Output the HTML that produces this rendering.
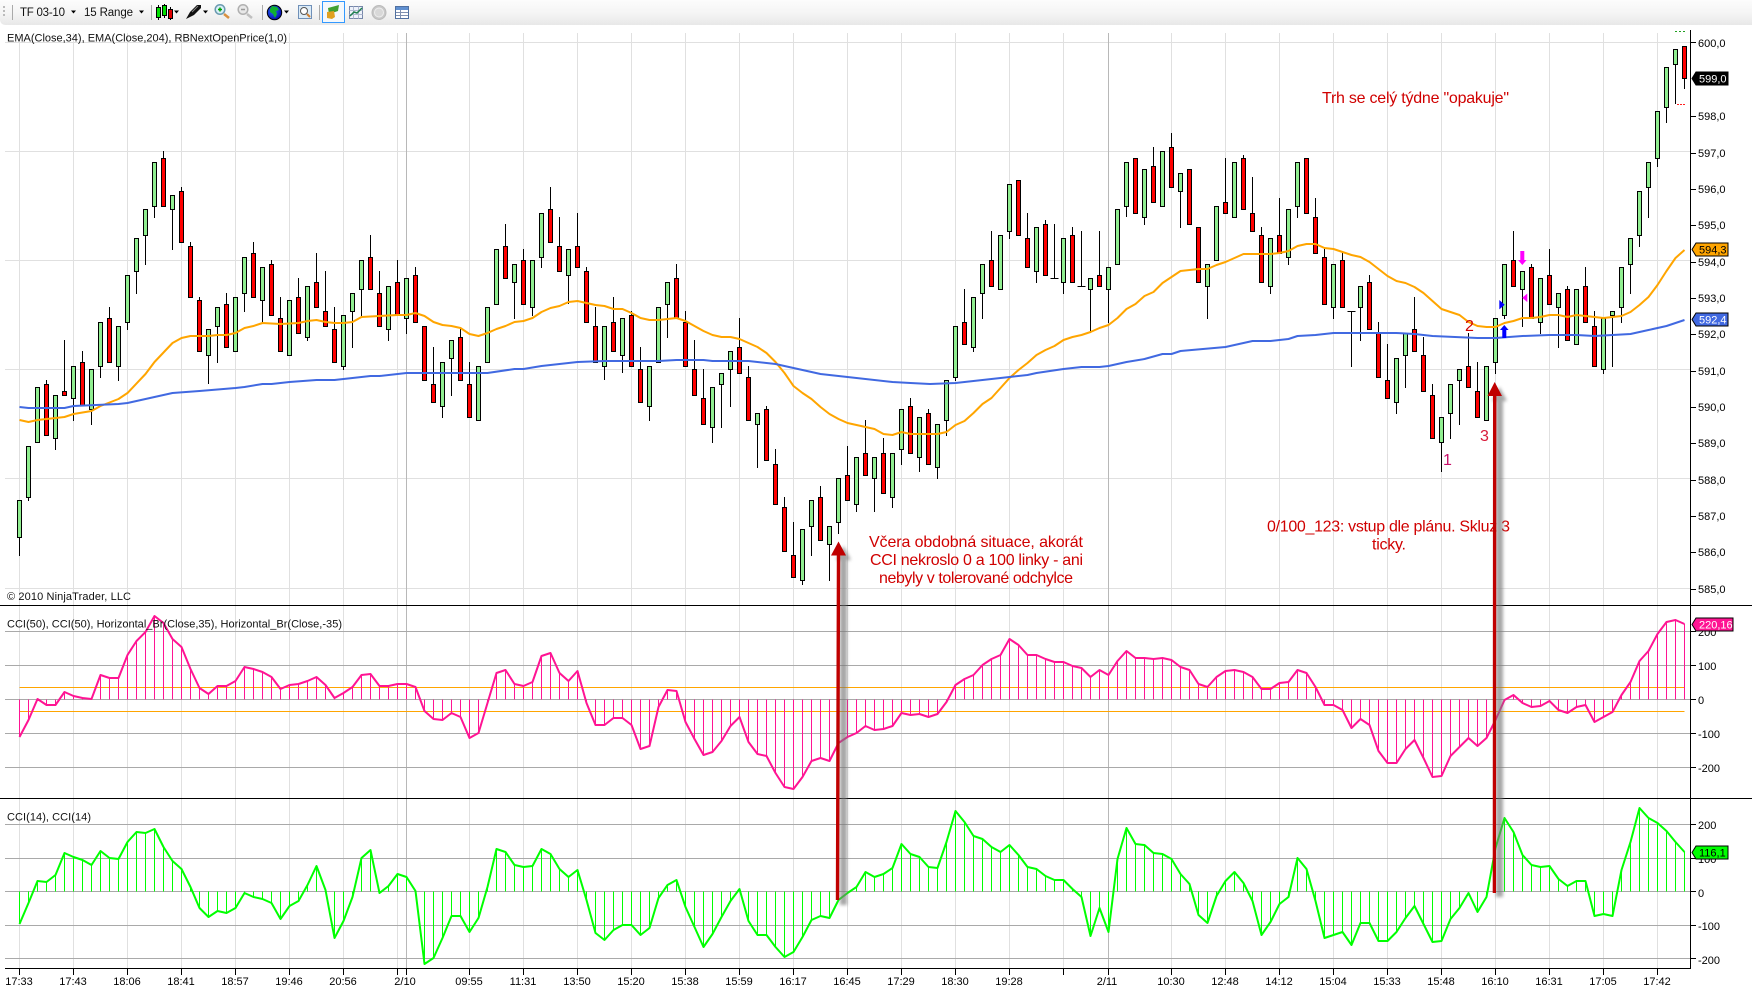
<!DOCTYPE html>
<html><head><meta charset="utf-8"><title>Chart</title>
<style>
html,body{margin:0;padding:0;background:#fff;width:1752px;height:993px;overflow:hidden}
svg{display:block;font-family:"Liberation Sans",Arial,sans-serif;font-size:11px}
.r{fill:#d00000;font-size:16px}
</style></head><body>
<svg width="1752" height="993" viewBox="0 0 1752 993" xmlns="http://www.w3.org/2000/svg">
<defs>
<linearGradient id="tb" x1="0" y1="0" x2="0" y2="1"><stop offset="0" stop-color="#fcfcfc"/><stop offset=".5" stop-color="#f5f5f5"/><stop offset="1" stop-color="#e8e8e8"/></linearGradient>
<filter id="bl" x="-100%" y="-5%" width="300%" height="110%"><feGaussianBlur stdDeviation="1.5"/></filter>
<radialGradient id="glb" cx=".4" cy=".4" r=".7"><stop offset="0" stop-color="#2a6cff"/><stop offset="1" stop-color="#0000a0"/></radialGradient>
</defs>
<rect width="1752" height="993" fill="#fff"/>
<!-- toolbar -->
<path d="M0 0H1752V25H6Q0 25 0 19z" fill="url(#tb)"/>
<path d="M3 6h2v2H3zM3 10h2v2H3zM3 14h2v2H3z" fill="#bbb"/>
<path d="M12.5 5V20M151.5 5V20M262.5 5V20M319.5 5V20" stroke="#aaa" fill="none"/>
<text x="20" y="16" font-size="11.5" textLength="45" fill="#111">TF 03-10</text>
<text x="84" y="16" font-size="11.5" textLength="49" fill="#111">15 Range</text>
<path d="M71 10.5h5l-2.500 3zM139 10.500h5l-2.500 3zM174 10.500h5l-2.500 3zM203 10.500h5l-2.500 3zM284 10.500h5l-2.500 3z" fill="#000"/>
<!-- candle icon -->
<path d="M158.500 5V20M164.500 4V18M170.500 7V20" stroke="#000"/>
<rect x="156.500" y="7.500" width="4" height="10" fill="#00e000" stroke="#000"/>
<rect x="162.500" y="5.500" width="4" height="10" fill="#00e000" stroke="#000"/>
<rect x="168.500" y="9.500" width="4" height="9" fill="#e00000" stroke="#000"/>
<!-- pen icon -->
<path d="M186 19L190 12 197 5 201 5 201 8 194 15z" fill="#111"/><path d="M192 12L198 6" stroke="#888"/>
<!-- zoom in/out -->
<circle cx="220" cy="9.500" r="4.800" fill="#d8f0f8" stroke="#6a9ab0" stroke-width="1.500"/><path d="M218 9.500h4M220 7.500v4" stroke="#00a000" stroke-width="1.500"/><path d="M224 14L229 18" stroke="#d89040" stroke-width="2.500"/>
<circle cx="243" cy="9.500" r="4.800" fill="#e8e8e8" stroke="#b0b0b0" stroke-width="1.500"/><path d="M241 9.500h4" stroke="#999" stroke-width="1.500"/><path d="M247 14L252 18" stroke="#c0c0c0" stroke-width="2.500"/>
<!-- globe -->
<circle cx="274.500" cy="12.500" r="7.200" fill="url(#glb)" stroke="#000"/><path d="M272 6l5 1 2 3-3 1 1 3-2 4-2-4-3-2 0-3z" fill="#10b030"/>
<!-- doc zoom -->
<rect x="298.500" y="5.500" width="13" height="13" fill="#dcecf8" stroke="#7090b8"/><circle cx="304" cy="11" r="3.500" fill="#fff" stroke="#555"/><path d="M307 14l3 3" stroke="#d08030" stroke-width="2"/>
<!-- selected -->
<rect x="322.500" y="1.500" width="22" height="21" fill="#f4f8fc" stroke="#3399ff"/>
<path d="M328 8l11-3-1 6-9 3z" fill="#40a030"/><path d="M327 12l7-1 1 6-3 2-5-1z" fill="#e0a020"/>
<!-- chart -->
<rect x="349.500" y="6.500" width="13" height="12" fill="#eef2fa" stroke="#7788aa"/><path d="M353.500 6.500V18.500M358.500 6.500V18.500M349.500 10.500H362.500M349.500 14.500H362.500" stroke="#b0b8d0"/><path d="M350 16l4-4 3 1 5-5" stroke="#208050" stroke-width="1.500" fill="none"/>
<!-- coin -->
<circle cx="379" cy="12.500" r="7" fill="#c8c8c8" stroke="#bbb"/><circle cx="379" cy="12.500" r="4.500" fill="#d8d8d8" stroke="#eee"/>
<!-- table -->
<rect x="395.500" y="6.500" width="13" height="12" fill="#fff" stroke="#5070a0"/><rect x="396" y="7" width="12" height="3" fill="#5f8fd0"/><path d="M396 12.500H408M396 15.500H408M400.500 10V18" stroke="#8090b0"/>

<!-- grid -->
<g stroke="#e0e0e0" fill="none">
<path d="M5 42.500H1690M5 151.500H1690M5 260.500H1690M5 369.500H1690M5 478.500H1690M5 588.500H1690"/>
<path d="M19.500 33V968M73.500 33V968M127.500 33V968M181.500 33V968M235.500 33V968M289.500 33V968M343.500 33V968M397.500 33V968M469.500 33V968M523.500 33V968M577.500 33V968M631.500 33V968M685.500 33V968M739.500 33V968M793.500 33V968M847.500 33V968M901.500 33V968M955.500 33V968M1009.500 33V968M1063.500 33V968M1171.500 33V968M1225.500 33V968M1279.500 33V968M1333.500 33V968M1387.500 33V968M1441.500 33V968M1495.500 33V968M1549.500 33V968M1603.500 33V968M1657.500 33V968"/>
</g>
<path d="M406.500 33V968M1108.500 33V968" stroke="#b8b8b8" fill="none"/>
<path d="M5 631.500H1690M5 665.500H1690M5 699.500H1690M5 733.500H1690M5 767.500H1690M5 824.500H1690M5 858.500H1690M5 891.500H1690M5 925.500H1690M5 958.500H1690" stroke="#a9a9a9" fill="none"/>
<path d="M19.500 687.500H1684.500M19.500 711.500H1684.500" stroke="#ffa500" fill="none"/>

<!-- wicks -->
<path fill="none" stroke="#000" d="M19.500 500V556M28.500 446V501M46.500 380V385M55.500 438V450M64.500 340V392M73.500 398V421M82.500 351V363M91.500 409V425M100.500 366V378M109.500 307V319M118.500 366V381M127.500 322V330M136.500 271V294M145.500 235V265M154.500 206V218M163.500 151V159M172.500 209V250M181.500 187V192M190.500 242V247M199.500 297V301M208.500 355V384M217.500 326V363M226.500 293V305M244.500 293V312M253.500 242V254M262.500 300V323M271.500 260V265M280.500 297V319M298.500 278V298M307.500 337V341M316.500 253V283M325.500 271V312M334.500 307V330M343.500 366V370M352.500 311V348M361.500 289V316M370.500 235V258M379.500 271V294M388.500 329V341M397.500 260V283M406.500 318V334M415.500 267V276M433.500 347V385M442.500 406V418M451.500 358V396M460.500 327V338M469.500 362V385M505.500 224V247M514.500 282V319M523.500 249V261M532.500 307V316M541.500 257V268M550.500 187V210M559.500 217V247M568.500 275V304M577.500 213V247M586.500 267V272M595.500 307V327M604.500 366V380M613.500 297V323M622.500 355V373M631.500 311V316M640.500 347V370M649.500 406V421M667.500 304V338M676.500 264V279M685.500 311V323M694.500 340V370M703.500 369V399M712.500 427V443M721.500 384V428M730.500 369V407M739.500 318V348M748.500 366V378M757.500 424V468M766.500 406V410M775.500 449V465M784.500 497V508M793.500 522V556M802.500 580V585M811.500 526V556M820.500 486V498M829.500 544V581M838.500 522V534M847.500 446V476M856.500 504V512M865.500 420V454M874.500 478V512M883.500 438V454M892.500 497V508M901.500 449V465M910.500 398V407M919.500 457V472M928.500 409V414M937.500 467V479M946.500 420V436M955.500 377V381M964.500 289V323M973.500 347V352M982.500 293V319M991.500 231V261M1009.500 231V239M1027.500 213V239M1036.500 271V283M1045.500 220V225M1054.500 224V278M1050.500 278.500H1058.500M1063.500 282V294M1072.500 227V236M1081.500 231V286M1077.500 286.500H1085.500M1090.500 289V333M1099.500 231V276M1108.500 289V323M1126.500 206V217M1144.500 217V225M1153.500 147V167M1171.500 133V148M1180.500 191V228M1207.500 286V319M1225.500 158V203M1243.500 155V159M1252.500 177V214M1261.500 227V236M1270.500 286V294M1279.500 198V236M1288.500 257V265M1297.500 206V218M1315.500 198V218M1324.500 249V258M1333.500 307V319M1342.500 253V261M1351.500 311V367M1347.500 311.500H1355.500M1360.500 307V341M1369.500 275V283M1378.500 322V334M1387.500 344V381M1396.500 402V414M1405.500 355V388M1414.500 297V330M1423.500 337V356M1432.500 384V396M1441.500 442V472M1450.500 413V439M1459.500 380V425M1468.500 333V367M1477.500 362V392M1495.500 362V374M1504.500 315V319M1513.500 231V261M1522.500 289V327M1531.500 264V268M1540.500 322V334M1549.500 249V276M1558.500 307V348M1567.500 286V290M1585.500 267V287M1594.500 311V327M1603.500 369V374M1612.500 315V367M1621.500 307V323M1630.500 264V294M1639.500 235V247M1648.500 187V218M1657.500 158V167M1666.500 107V123M1675.500 64V104M1684.500 78V89"/>
<!-- green bodies -->
<path fill="#90ee90" stroke="#000" d="M17.500 500.500h4V537.500h-4zM26.500 446.500h4V497.500h-4zM35.500 387.500h4V442.500h-4zM53.500 395.500h4V438.500h-4zM71.500 366.500h4V398.500h-4zM89.500 369.500h4V409.500h-4zM98.500 322.500h4V366.500h-4zM116.500 326.500h4V366.500h-4zM125.500 275.500h4V322.500h-4zM134.500 238.500h4V271.500h-4zM143.500 209.500h4V235.500h-4zM152.500 162.500h4V206.500h-4zM170.500 195.500h4V209.500h-4zM206.500 329.500h4V355.500h-4zM215.500 307.500h4V326.500h-4zM233.500 297.500h4V351.500h-4zM242.500 257.500h4V293.500h-4zM260.500 267.500h4V300.500h-4zM287.500 300.500h4V355.500h-4zM305.500 286.500h4V337.500h-4zM341.500 315.500h4V366.500h-4zM350.500 293.500h4V311.500h-4zM359.500 260.500h4V289.500h-4zM386.500 286.500h4V329.500h-4zM404.500 278.500h4V318.500h-4zM440.500 362.500h4V406.500h-4zM449.500 340.500h4V358.500h-4zM476.500 366.500h4V420.500h-4zM485.500 307.500h4V362.500h-4zM494.500 249.500h4V304.500h-4zM512.500 264.500h4V282.500h-4zM530.500 260.500h4V307.500h-4zM539.500 213.500h4V257.500h-4zM566.500 249.500h4V275.500h-4zM602.500 326.500h4V366.500h-4zM620.500 318.500h4V355.500h-4zM647.500 366.500h4V406.500h-4zM656.500 307.500h4V362.500h-4zM665.500 282.500h4V304.500h-4zM710.500 387.500h4V427.500h-4zM719.500 373.500h4V384.500h-4zM728.500 351.500h4V369.500h-4zM755.500 413.500h4V424.500h-4zM800.500 529.500h4V580.500h-4zM809.500 500.500h4V526.500h-4zM827.500 526.500h4V544.500h-4zM836.500 478.500h4V522.500h-4zM854.500 457.500h4V504.500h-4zM872.500 457.500h4V478.500h-4zM890.500 453.500h4V497.500h-4zM899.500 409.500h4V449.500h-4zM917.500 417.500h4V457.500h-4zM935.500 424.500h4V467.500h-4zM944.500 380.500h4V420.500h-4zM953.500 326.500h4V377.500h-4zM971.500 297.500h4V347.500h-4zM980.500 264.500h4V293.500h-4zM998.500 235.500h4V289.500h-4zM1007.500 184.500h4V231.500h-4zM1034.500 227.500h4V271.500h-4zM1061.500 238.500h4V282.500h-4zM1088.500 278.500h4V289.500h-4zM1106.500 267.500h4V289.500h-4zM1115.500 209.500h4V264.500h-4zM1124.500 162.500h4V206.500h-4zM1142.500 169.500h4V217.500h-4zM1160.500 151.500h4V206.500h-4zM1178.500 173.500h4V191.500h-4zM1205.500 264.500h4V286.500h-4zM1214.500 206.500h4V260.500h-4zM1232.500 162.500h4V217.500h-4zM1268.500 238.500h4V286.500h-4zM1286.500 209.500h4V257.500h-4zM1295.500 162.500h4V206.500h-4zM1331.500 264.500h4V307.500h-4zM1358.500 286.500h4V307.500h-4zM1394.500 358.500h4V402.500h-4zM1403.500 333.500h4V355.500h-4zM1439.500 417.500h4V442.500h-4zM1448.500 384.500h4V413.500h-4zM1457.500 369.500h4V380.500h-4zM1484.500 366.500h4V420.500h-4zM1493.500 318.500h4V362.500h-4zM1502.500 264.500h4V315.500h-4zM1520.500 271.500h4V289.500h-4zM1538.500 278.500h4V322.500h-4zM1556.500 293.500h4V307.500h-4zM1574.500 289.500h4V344.500h-4zM1601.500 318.500h4V369.500h-4zM1610.500 311.500h4V315.500h-4zM1619.500 267.500h4V307.500h-4zM1628.500 238.500h4V264.500h-4zM1637.500 191.500h4V235.500h-4zM1646.500 162.500h4V187.500h-4zM1655.500 111.500h4V158.500h-4zM1664.500 67.500h4V107.500h-4zM1673.500 49.500h4V64.500h-4z"/>
<!-- red bodies -->
<path fill="#f00" stroke="#000" d="M44.500 384.500h4V435.500h-4zM62.500 391.500h4V395.500h-4zM80.500 362.500h4V405.500h-4zM107.500 318.500h4V362.500h-4zM161.500 158.500h4V206.500h-4zM179.500 191.500h4V242.500h-4zM188.500 246.500h4V297.500h-4zM197.500 300.500h4V351.500h-4zM224.500 304.500h4V347.500h-4zM251.500 253.500h4V297.500h-4zM269.500 264.500h4V315.500h-4zM278.500 318.500h4V351.500h-4zM296.500 297.500h4V333.500h-4zM314.500 282.500h4V307.500h-4zM323.500 311.500h4V326.500h-4zM332.500 329.500h4V362.500h-4zM368.500 257.500h4V289.500h-4zM377.500 293.500h4V326.500h-4zM395.500 282.500h4V315.500h-4zM413.500 275.500h4V322.500h-4zM422.500 326.500h4V380.500h-4zM431.500 384.500h4V402.500h-4zM458.500 337.500h4V380.500h-4zM467.500 384.500h4V417.500h-4zM503.500 246.500h4V278.500h-4zM521.500 260.500h4V304.500h-4zM548.500 209.500h4V242.500h-4zM557.500 246.500h4V271.500h-4zM575.500 246.500h4V267.500h-4zM584.500 271.500h4V322.500h-4zM593.500 326.500h4V362.500h-4zM611.500 322.500h4V351.500h-4zM629.500 315.500h4V366.500h-4zM638.500 369.500h4V402.500h-4zM674.500 278.500h4V318.500h-4zM683.500 322.500h4V366.500h-4zM692.500 369.500h4V395.500h-4zM701.500 398.500h4V424.500h-4zM737.500 347.500h4V373.500h-4zM746.500 377.500h4V420.500h-4zM764.500 409.500h4V460.500h-4zM773.500 464.500h4V504.500h-4zM782.500 507.500h4V551.500h-4zM791.500 555.500h4V577.500h-4zM818.500 497.500h4V540.500h-4zM845.500 475.500h4V500.500h-4zM863.500 453.500h4V475.500h-4zM881.500 453.500h4V493.500h-4zM908.500 406.500h4V453.500h-4zM926.500 413.500h4V464.500h-4zM962.500 322.500h4V344.500h-4zM989.500 260.500h4V286.500h-4zM1016.500 180.500h4V235.500h-4zM1025.500 238.500h4V267.500h-4zM1043.500 224.500h4V275.500h-4zM1070.500 235.500h4V282.500h-4zM1097.500 275.500h4V286.500h-4zM1133.500 158.500h4V213.500h-4zM1151.500 166.500h4V202.500h-4zM1169.500 147.500h4V187.500h-4zM1187.500 169.500h4V224.500h-4zM1196.500 227.500h4V282.500h-4zM1223.500 202.500h4V213.500h-4zM1241.500 158.500h4V209.500h-4zM1250.500 213.500h4V231.500h-4zM1259.500 235.500h4V282.500h-4zM1277.500 235.500h4V253.500h-4zM1304.500 158.500h4V213.500h-4zM1313.500 217.500h4V253.500h-4zM1322.500 257.500h4V304.500h-4zM1340.500 260.500h4V307.500h-4zM1367.500 282.500h4V329.500h-4zM1376.500 333.500h4V377.500h-4zM1385.500 380.500h4V398.500h-4zM1412.500 329.500h4V351.500h-4zM1421.500 355.500h4V391.500h-4zM1430.500 395.500h4V438.500h-4zM1466.500 366.500h4V387.500h-4zM1475.500 391.500h4V417.500h-4zM1511.500 260.500h4V286.500h-4zM1529.500 267.500h4V318.500h-4zM1547.500 275.500h4V304.500h-4zM1565.500 289.500h4V340.500h-4zM1583.500 286.500h4V322.500h-4zM1592.500 326.500h4V366.500h-4zM1682.500 46.500h4V78.500h-4z"/>
<!-- EMA lines -->
<path fill="none" stroke="#ffa500" stroke-width="2" stroke-linejoin="round" d="M19.500 420 28.500 422 37.500 420 55.500 418 64.500 417 73.500 414 91.500 411 100.500 406 118.500 399 127.500 393 145.500 374 154.500 362 172.500 343 181.500 338 190.500 336 208.500 336 217.500 335 226.500 335 235.500 333 244.500 328 253.500 326 262.500 323 280.500 324 298.500 323 307.500 321 316.500 320 325.500 322 334.500 323 343.500 323 352.500 322 361.500 317 379.500 316 397.500 315 406.500 315 415.500 313 424.500 316 433.500 322 442.500 325 451.500 326 460.500 328 469.500 334 478.500 336 487.500 333 496.500 329 505.500 326 514.500 322 523.500 321 532.500 318 541.500 312 550.500 308 559.500 306 568.500 302 577.500 301 586.500 303 595.500 305 604.500 306 613.500 309 622.500 309 631.500 313 640.500 318 649.500 320 658.500 320 667.500 319 676.500 318 685.500 321 694.500 326 703.500 331 712.500 335 721.500 337 730.500 337 739.500 339 748.500 343 757.500 347 766.500 353 775.500 362 784.500 373 793.500 386 802.500 393 811.500 399 820.500 407 829.500 414 838.500 419 847.500 423 856.500 425 865.500 427 874.500 429 883.500 434 892.500 435 901.500 432 910.500 434 919.500 434 928.500 434 937.500 434 946.500 432 955.500 425 964.500 421 973.500 413 982.500 404 991.500 398 1000.500 388 1009.500 378 1018.500 370 1027.500 363 1036.500 355 1045.500 350 1054.500 346 1063.500 340 1072.500 337 1081.500 335 1090.500 332 1099.500 328 1108.500 325 1117.500 318 1126.500 309 1135.500 304 1144.500 296 1153.500 292 1162.500 283 1171.500 277 1180.500 271 1189.500 270 1198.500 269 1207.500 269 1216.500 265 1225.500 262 1234.500 258 1243.500 254 1252.500 254 1261.500 254 1270.500 254 1279.500 253 1288.500 251 1297.500 246 1306.500 244 1315.500 244 1324.500 248 1333.500 249 1342.500 252 1351.500 255 1360.500 257 1369.500 262 1378.500 269 1387.500 276 1396.500 281 1405.500 283 1414.500 287 1423.500 293 1432.500 301 1441.500 309 1450.500 312 1459.500 315 1468.500 322 1477.500 326 1486.500 327 1495.500 327 1504.500 323 1513.500 321 1522.500 318 1531.500 318 1540.500 317 1549.500 315 1558.500 315 1567.500 317 1576.500 315 1585.500 316 1594.500 317 1603.500 318 1612.500 317 1621.500 316 1630.500 312 1639.500 305 1648.500 297 1657.500 285 1666.500 271 1675.500 258 1684.500 250"/>
<path fill="none" stroke="#4169e1" stroke-width="2" stroke-linejoin="round" d="M19.500 407 28.500 408 64.500 408 73.500 406 118.500 404 127.500 403 145.500 399 172.500 393 199.500 391 235.500 388 244.500 387 262.500 384 271.500 384 289.500 382 316.500 380 334.500 380 343.500 379 370.500 376 379.500 376 406.500 373 450 373 478.500 373 487.500 373 514.500 369 523.500 369 541.500 366 577.500 362 604.500 361 658.500 361 676.500 360 703.500 360 712.500 361 748.500 361 775.500 364 802.500 370 820.500 374 847.500 377 892.500 382 910.500 383 930 384 955.500 383 973.500 381 1009.500 377 1027.500 375 1036.500 373 1063.500 369 1081.500 367 1099.500 367 1108.500 366 1126.500 362 1144.500 359 1162.500 354 1171.500 354 1180.500 351 1225.500 347 1243.500 343 1252.500 341 1270.500 341 1288.500 339 1297.500 336 1315.500 335 1333.500 333 1351.500 333 1360.500 333 1396.500 333 1414.500 334 1432.500 336 1477.500 338 1495.500 338 1522.500 336 1549.500 335 1576.500 335 1594.500 336 1630.500 334 1648.500 330 1666.500 326 1684.500 320"/>
<!-- markers -->
<path d="M1504.300 325l4.300 5h-2.300v8h-4v-8h-2.300z" fill="#0000ff"/>
<path d="M1522.300 265l-4.300-5h2.300v-9h4v9h2.300z" fill="#ff00ff"/>
<path d="M1499.300 300l5.400 4.700-5.400 4.700z" fill="#0000ff"/>
<path d="M1527.300 293.500l-5 4.300 5 4.300z" fill="#ff00ff"/>
<path d="M1675 31.500h2M1679 31.500h2M1683 31.500h2" stroke="#20a020" fill="none"/>
<path d="M1677 104.500h2M1680 104.500h2M1683 104.500h2" stroke="#ff2020" fill="none"/>

<!-- CCI 50 -->
<path fill="none" stroke="#ff1493" d="M19.500 699.500V737M28.500 699.500V720M46.500 699.500V705M55.500 699.500V705M64.500 699.500V692M73.500 699.500V696M82.500 699.500V698M100.500 699.500V675M109.500 699.500V678M118.500 699.500V678M127.500 699.500V655M136.500 699.500V641M145.500 699.500V632M154.500 699.500V616M163.500 699.500V623M172.500 699.500V639M181.500 699.500V647M190.500 699.500V669M199.500 699.500V688M208.500 699.500V694M217.500 699.500V686M226.500 699.500V686M235.500 699.500V681M244.500 699.500V667M253.500 699.500V669M262.500 699.500V672M271.500 699.500V677M280.500 699.500V689M289.500 699.500V685M298.500 699.500V684M307.500 699.500V681M316.500 699.500V677M325.500 699.500V685M334.500 699.500V698M343.500 699.500V693M352.500 699.500V687M361.500 699.500V675M370.500 699.500V674M379.500 699.500V686M388.500 699.500V686M397.500 699.500V684M406.500 699.500V684M415.500 699.500V687M424.500 699.500V711M433.500 699.500V719M442.500 699.500V720M451.500 699.500V713M460.500 699.500V717M469.500 699.500V738M478.500 699.500V733M487.500 699.500V703M496.500 699.500V673M505.500 699.500V670M514.500 699.500V684M523.500 699.500V686M532.500 699.500V682M541.500 699.500V656M550.500 699.500V653M559.500 699.500V673M568.500 699.500V681M577.500 699.500V671M586.500 699.500V703M595.500 699.500V725M604.500 699.500V725M613.500 699.500V718M622.500 699.500V718M631.500 699.500V725M640.500 699.500V749M649.500 699.500V746M658.500 699.500V707M667.500 699.500V690M676.500 699.500V691M685.500 699.500V722M694.500 699.500V739M703.500 699.500V755M712.500 699.500V752M721.500 699.500V741M730.500 699.500V726M739.500 699.500V717M748.500 699.500V742M757.500 699.500V754M766.500 699.500V756M775.500 699.500V773M784.500 699.500V787M793.500 699.500V789M802.500 699.500V777M811.500 699.500V761M820.500 699.500V758M829.500 699.500V761M838.500 699.500V743M847.500 699.500V737M856.500 699.500V733M865.500 699.500V726M874.500 699.500V730M883.500 699.500V729M892.500 699.500V726M901.500 699.500V713M910.500 699.500V715M919.500 699.500V714M928.500 699.500V717M937.500 699.500V714M946.500 699.500V702M955.500 699.500V685M964.500 699.500V679M973.500 699.500V675M982.500 699.500V665M991.500 699.500V659M1000.500 699.500V655M1009.500 699.500V639M1018.500 699.500V645M1027.500 699.500V655M1036.500 699.500V655M1045.500 699.500V659M1054.500 699.500V662M1063.500 699.500V662M1072.500 699.500V666M1081.500 699.500V668M1090.500 699.500V677M1099.500 699.500V670M1108.500 699.500V675M1117.500 699.500V661M1126.500 699.500V651M1135.500 699.500V658M1144.500 699.500V658M1153.500 699.500V659M1162.500 699.500V658M1171.500 699.500V660M1180.500 699.500V667M1189.500 699.500V670M1198.500 699.500V684M1207.500 699.500V687M1216.500 699.500V677M1225.500 699.500V671M1234.500 699.500V670M1243.500 699.500V672M1252.500 699.500V677M1261.500 699.500V689M1270.500 699.500V689M1279.500 699.500V683M1288.500 699.500V682M1297.500 699.500V670M1306.500 699.500V673M1315.500 699.500V687M1324.500 699.500V705M1333.500 699.500V705M1342.500 699.500V710M1351.500 699.500V728M1360.500 699.500V719M1369.500 699.500V725M1378.500 699.500V751M1387.500 699.500V763M1396.500 699.500V763M1405.500 699.500V749M1414.500 699.500V740M1423.500 699.500V758M1432.500 699.500V777M1441.500 699.500V776M1450.500 699.500V756M1459.500 699.500V747M1468.500 699.500V738M1477.500 699.500V746M1486.500 699.500V738M1495.500 699.500V720M1504.500 699.500V700M1513.500 699.500V695M1522.500 699.500V703M1531.500 699.500V707M1540.500 699.500V706M1549.500 699.500V701M1558.500 699.500V710M1567.500 699.500V713M1576.500 699.500V707M1585.500 699.500V705M1594.500 699.500V722M1603.500 699.500V717M1612.500 699.500V712M1621.500 699.500V695M1630.500 699.500V682M1639.500 699.500V661M1648.500 699.500V651M1657.500 699.500V634M1666.500 699.500V622M1675.500 699.500V620M1684.500 699.500V624"/>
<path fill="none" stroke="#ff1493" stroke-width="2" stroke-linejoin="round" d="M19.500 737 28.500 720 37.500 699 46.500 705 55.500 705 64.500 692 73.500 696 82.500 698 91.500 699 100.500 675 109.500 678 118.500 678 127.500 655 136.500 641 145.500 632 154.500 616 163.500 623 172.500 639 181.500 647 190.500 669 199.500 688 208.500 694 217.500 686 226.500 686 235.500 681 244.500 667 253.500 669 262.500 672 271.500 677 280.500 689 289.500 685 298.500 684 307.500 681 316.500 677 325.500 685 334.500 698 343.500 693 352.500 687 361.500 675 370.500 674 379.500 686 388.500 686 397.500 684 406.500 684 415.500 687 424.500 711 433.500 719 442.500 720 451.500 713 460.500 717 469.500 738 478.500 733 487.500 703 496.500 673 505.500 670 514.500 684 523.500 686 532.500 682 541.500 656 550.500 653 559.500 673 568.500 681 577.500 671 586.500 703 595.500 725 604.500 725 613.500 718 622.500 718 631.500 725 640.500 749 649.500 746 658.500 707 667.500 690 676.500 691 685.500 722 694.500 739 703.500 755 712.500 752 721.500 741 730.500 726 739.500 717 748.500 742 757.500 754 766.500 756 775.500 773 784.500 787 793.500 789 802.500 777 811.500 761 820.500 758 829.500 761 838.500 743 847.500 737 856.500 733 865.500 726 874.500 730 883.500 729 892.500 726 901.500 713 910.500 715 919.500 714 928.500 717 937.500 714 946.500 702 955.500 685 964.500 679 973.500 675 982.500 665 991.500 659 1000.500 655 1009.500 639 1018.500 645 1027.500 655 1036.500 655 1045.500 659 1054.500 662 1063.500 662 1072.500 666 1081.500 668 1090.500 677 1099.500 670 1108.500 675 1117.500 661 1126.500 651 1135.500 658 1144.500 658 1153.500 659 1162.500 658 1171.500 660 1180.500 667 1189.500 670 1198.500 684 1207.500 687 1216.500 677 1225.500 671 1234.500 670 1243.500 672 1252.500 677 1261.500 689 1270.500 689 1279.500 683 1288.500 682 1297.500 670 1306.500 673 1315.500 687 1324.500 705 1333.500 705 1342.500 710 1351.500 728 1360.500 719 1369.500 725 1378.500 751 1387.500 763 1396.500 763 1405.500 749 1414.500 740 1423.500 758 1432.500 777 1441.500 776 1450.500 756 1459.500 747 1468.500 738 1477.500 746 1486.500 738 1495.500 720 1504.500 700 1513.500 695 1522.500 703 1531.500 707 1540.500 706 1549.500 701 1558.500 710 1567.500 713 1576.500 707 1585.500 705 1594.500 722 1603.500 717 1612.500 712 1621.500 695 1630.500 682 1639.500 661 1648.500 651 1657.500 634 1666.500 622 1675.500 620 1684.500 624"/>

<!-- CCI 14 -->
<path fill="none" stroke="#00ff00" d="M19.500 891.500V924M28.500 891.500V903M37.500 891.500V881M46.500 891.500V882M55.500 891.500V875M64.500 891.500V853M73.500 891.500V857M82.500 891.500V860M91.500 891.500V865M100.500 891.500V851M109.500 891.500V858M118.500 891.500V859M127.500 891.500V842M136.500 891.500V832M145.500 891.500V833M154.500 891.500V829M163.500 891.500V847M172.500 891.500V861M181.500 891.500V869M190.500 891.500V887M199.500 891.500V908M208.500 891.500V917M217.500 891.500V911M226.500 891.500V913M235.500 891.500V908M244.500 891.500V893M253.500 891.500V897M262.500 891.500V899M271.500 891.500V903M280.500 891.500V919M289.500 891.500V906M298.500 891.500V901M307.500 891.500V885M316.500 891.500V866M334.500 891.500V938M343.500 891.500V921M352.500 891.500V897M361.500 891.500V858M370.500 891.500V850M388.500 891.500V886M397.500 891.500V874M406.500 891.500V877M424.500 891.500V964M433.500 891.500V958M442.500 891.500V938M451.500 891.500V916M460.500 891.500V916M469.500 891.500V932M478.500 891.500V918M487.500 891.500V887M496.500 891.500V849M505.500 891.500V852M514.500 891.500V865M523.500 891.500V867M532.500 891.500V866M541.500 891.500V849M550.500 891.500V854M559.500 891.500V869M568.500 891.500V877M577.500 891.500V870M586.500 891.500V900M595.500 891.500V933M604.500 891.500V940M613.500 891.500V930M622.500 891.500V925M631.500 891.500V925M640.500 891.500V935M649.500 891.500V928M658.500 891.500V898M667.500 891.500V885M676.500 891.500V880M685.500 891.500V907M694.500 891.500V927M703.500 891.500V947M712.500 891.500V934M721.500 891.500V917M730.500 891.500V901M739.500 891.500V889M748.500 891.500V921M757.500 891.500V935M766.500 891.500V935M775.500 891.500V947M784.500 891.500V957M793.500 891.500V952M802.500 891.500V937M811.500 891.500V920M820.500 891.500V916M829.500 891.500V918M838.500 891.500V900M856.500 891.500V887M865.500 891.500V872M874.500 891.500V877M883.500 891.500V874M892.500 891.500V868M901.500 891.500V844M910.500 891.500V854M919.500 891.500V857M928.500 891.500V867M937.500 891.500V868M946.500 891.500V842M955.500 891.500V811M964.500 891.500V822M973.500 891.500V836M982.500 891.500V839M991.500 891.500V847M1000.500 891.500V852M1009.500 891.500V845M1018.500 891.500V855M1027.500 891.500V867M1036.500 891.500V869M1045.500 891.500V876M1054.500 891.500V880M1063.500 891.500V880M1072.500 891.500V889M1081.500 891.500V897M1090.500 891.500V936M1099.500 891.500V908M1108.500 891.500V932M1117.500 891.500V859M1126.500 891.500V828M1135.500 891.500V844M1144.500 891.500V845M1153.500 891.500V853M1162.500 891.500V854M1171.500 891.500V859M1180.500 891.500V874M1189.500 891.500V884M1198.500 891.500V915M1207.500 891.500V923M1216.500 891.500V896M1225.500 891.500V881M1234.500 891.500V872M1243.500 891.500V883M1252.500 891.500V901M1261.500 891.500V935M1270.500 891.500V922M1279.500 891.500V904M1288.500 891.500V897M1297.500 891.500V858M1306.500 891.500V869M1315.500 891.500V901M1324.500 891.500V938M1333.500 891.500V935M1342.500 891.500V932M1351.500 891.500V945M1360.500 891.500V923M1369.500 891.500V923M1378.500 891.500V941M1387.500 891.500V941M1396.500 891.500V932M1405.500 891.500V918M1414.500 891.500V906M1423.500 891.500V924M1432.500 891.500V942M1441.500 891.500V941M1450.500 891.500V919M1459.500 891.500V908M1477.500 891.500V912M1486.500 891.500V897M1495.500 891.500V848M1504.500 891.500V818M1513.500 891.500V832M1522.500 891.500V855M1531.500 891.500V865M1540.500 891.500V867M1549.500 891.500V866M1558.500 891.500V879M1567.500 891.500V886M1576.500 891.500V881M1585.500 891.500V881M1594.500 891.500V916M1603.500 891.500V914M1612.500 891.500V916M1621.500 891.500V870M1630.500 891.500V842M1639.500 891.500V808M1648.500 891.500V818M1657.500 891.500V823M1666.500 891.500V831M1675.500 891.500V842M1684.500 891.500V852"/>
<path fill="none" stroke="#00ff00" stroke-width="2" stroke-linejoin="round" d="M19.500 924 28.500 903 37.500 881 46.500 882 55.500 875 64.500 853 73.500 857 82.500 860 91.500 865 100.500 851 109.500 858 118.500 859 127.500 842 136.500 832 145.500 833 154.500 829 163.500 847 172.500 861 181.500 869 190.500 887 199.500 908 208.500 917 217.500 911 226.500 913 235.500 908 244.500 893 253.500 897 262.500 899 271.500 903 280.500 919 289.500 906 298.500 901 307.500 885 316.500 866 325.500 890 334.500 938 343.500 921 352.500 897 361.500 858 370.500 850 379.500 893 388.500 886 397.500 874 406.500 877 415.500 891 424.500 964 433.500 958 442.500 938 451.500 916 460.500 916 469.500 932 478.500 918 487.500 887 496.500 849 505.500 852 514.500 865 523.500 867 532.500 866 541.500 849 550.500 854 559.500 869 568.500 877 577.500 870 586.500 900 595.500 933 604.500 940 613.500 930 622.500 925 631.500 925 640.500 935 649.500 928 658.500 898 667.500 885 676.500 880 685.500 907 694.500 927 703.500 947 712.500 934 721.500 917 730.500 901 739.500 889 748.500 921 757.500 935 766.500 935 775.500 947 784.500 957 793.500 952 802.500 937 811.500 920 820.500 916 829.500 918 838.500 900 847.500 893 856.500 887 865.500 872 874.500 877 883.500 874 892.500 868 901.500 844 910.500 854 919.500 857 928.500 867 937.500 868 946.500 842 955.500 811 964.500 822 973.500 836 982.500 839 991.500 847 1000.500 852 1009.500 845 1018.500 855 1027.500 867 1036.500 869 1045.500 876 1054.500 880 1063.500 880 1072.500 889 1081.500 897 1090.500 936 1099.500 908 1108.500 932 1117.500 859 1126.500 828 1135.500 844 1144.500 845 1153.500 853 1162.500 854 1171.500 859 1180.500 874 1189.500 884 1198.500 915 1207.500 923 1216.500 896 1225.500 881 1234.500 872 1243.500 883 1252.500 901 1261.500 935 1270.500 922 1279.500 904 1288.500 897 1297.500 858 1306.500 869 1315.500 901 1324.500 938 1333.500 935 1342.500 932 1351.500 945 1360.500 923 1369.500 923 1378.500 941 1387.500 941 1396.500 932 1405.500 918 1414.500 906 1423.500 924 1432.500 942 1441.500 941 1450.500 919 1459.500 908 1468.500 893 1477.500 912 1486.500 897 1495.500 848 1504.500 818 1513.500 832 1522.500 855 1531.500 865 1540.500 867 1549.500 866 1558.500 879 1567.500 886 1576.500 881 1585.500 881 1594.500 916 1603.500 914 1612.500 916 1621.500 870 1630.500 842 1639.500 808 1648.500 818 1657.500 823 1666.500 831 1675.500 842 1684.500 852"/>

<!-- axes -->
<path d="M0 605.500H1752M0 798.500H1752M5 968.500H1690.500M1690.500 30V969" stroke="#000" fill="none"/>
<path stroke="#000" fill="none" d="M1691 42.500h5M1691 116.500h5M1691 153.500h5M1691 189.500h5M1691 225.500h5M1691 262.500h5M1691 298.500h5M1691 334.500h5M1691 371.500h5M1691 407.500h5M1691 443.500h5M1691 480.500h5M1691 516.500h5M1691 552.500h5M1691 589.500h5M1691 631.500h5M1691 665.500h5M1691 699.500h5M1691 733.500h5M1691 767.500h5M1691 824.500h5M1691 858.500h5M1691 891.500h5M1691 925.500h5M1691 958.500h5M19.500 969v6M73.500 969v6M127.500 969v6M181.500 969v6M235.500 969v6M289.500 969v6M343.500 969v6M397.500 969v6M406.500 969v6M469.500 969v6M523.500 969v6M577.500 969v6M631.500 969v6M685.500 969v6M739.500 969v6M793.500 969v6M847.500 969v6M901.500 969v6M955.500 969v6M1009.500 969v6M1063.500 969v6M1108.500 969v6M1171.500 969v6M1225.500 969v6M1279.500 969v6M1333.500 969v6M1387.500 969v6M1441.500 969v6M1495.500 969v6M1549.500 969v6M1603.500 969v6M1657.500 969v6"/>
<g fill="#000">
<text x="1698" y="47">600,0</text><text x="1698" y="120">598,0</text><text x="1698" y="157">597,0</text><text x="1698" y="193">596,0</text><text x="1698" y="229">595,0</text><text x="1698" y="266">594,0</text><text x="1698" y="302">593,0</text><text x="1698" y="338">592,0</text><text x="1698" y="375">591,0</text><text x="1698" y="411">590,0</text><text x="1698" y="447">589,0</text><text x="1698" y="484">588,0</text><text x="1698" y="520">587,0</text><text x="1698" y="556">586,0</text><text x="1698" y="593">585,0</text>
<text x="1698" y="636">200</text><text x="1698" y="670">100</text><text x="1698" y="704">0</text><text x="1698" y="738">-100</text><text x="1698" y="772">-200</text>
<text x="1698" y="829">200</text><text x="1698" y="863">100</text><text x="1698" y="897">0</text><text x="1698" y="930">-100</text><text x="1698" y="964">-200</text>
</g>
<g fill="#000" text-anchor="middle">
<text x="19" y="985">17:33</text><text x="73" y="985">17:43</text><text x="127" y="985">18:06</text><text x="181" y="985">18:41</text><text x="235" y="985">18:57</text><text x="289" y="985">19:46</text><text x="343" y="985">20:56</text><text x="405" y="985">2/10</text><text x="469" y="985">09:55</text><text x="523" y="985">11:31</text><text x="577" y="985">13:50</text><text x="631" y="985">15:20</text><text x="685" y="985">15:38</text><text x="739" y="985">15:59</text><text x="793" y="985">16:17</text><text x="847" y="985">16:45</text><text x="901" y="985">17:29</text><text x="955" y="985">18:30</text><text x="1009" y="985">19:28</text><text x="1107" y="985">2/11</text><text x="1171" y="985">10:30</text><text x="1225" y="985">12:48</text><text x="1279" y="985">14:12</text><text x="1333" y="985">15:04</text><text x="1387" y="985">15:33</text><text x="1441" y="985">15:48</text><text x="1495" y="985">16:10</text><text x="1549" y="985">16:31</text><text x="1603" y="985">17:05</text><text x="1657" y="985">17:42</text>
</g>
<!-- flags -->
<path d="M1692 78.500L1696 72H1728V85H1696z" fill="#000" stroke="#000"/><text x="1699" y="82.500" fill="#fff">599,0</text>
<path d="M1692 249.500L1696 243H1728V256H1696z" fill="#ffa500" stroke="#000"/><text x="1699" y="253.500" fill="#000">594,3</text>
<path d="M1692 319.500L1696 313H1728V326H1696z" fill="#4169e1" stroke="#000"/><text x="1699" y="323.500" fill="#fff">592,4</text>
<path d="M1692 624.500L1696 618H1733V631H1696z" fill="#ff1493" stroke="#000"/><text x="1699" y="628.500" fill="#fff">220,16</text>
<path d="M1692 852.500L1696 846H1728V859H1696z" fill="#00ff00" stroke="#000"/><text x="1699" y="856.500" fill="#000">116,1</text>

<!-- legends -->
<g fill="#111">
<text x="7" y="41.500" textLength="280">EMA(Close,34), EMA(Close,204), RBNextOpenPrice(1,0)</text>
<text x="7" y="600" textLength="124">© 2010 NinjaTrader, LLC</text>
<text x="7" y="627.500" textLength="335">CCI(50), CCI(50), Horizontal_Br(Close,35), Horizontal_Br(Close,-35)</text>
<text x="7" y="820.500" textLength="84">CCI(14), CCI(14)</text>
</g>
<!-- annotations -->
<text class="r" x="1322" y="103" textLength="187">Trh se celý týdne "opakuje"</text>
<text class="r" x="869" y="547" textLength="214">Včera obdobná situace, akorát</text>
<text class="r" x="870" y="565" textLength="213">CCI nekroslo 0 a 100 linky - ani</text>
<text class="r" x="879" y="583" textLength="194">nebyly v tolerované odchylce</text>
<text class="r" x="1267" y="531.500" textLength="243">0/100_123: vstup dle plánu. Skluz 3</text>
<text class="r" x="1372" y="549.500" textLength="34">ticky.</text>
<text x="1443" y="465" font-size="16" fill="#c8106a">1</text>
<text x="1465" y="331" font-size="16" fill="#d00000">2</text>
<text x="1480" y="441" font-size="16" fill="#d81838">3</text>
<!-- arrows -->
<path d="M843.500 546L851 560H847V905H840V560H836z" fill="#777" opacity=".65" filter="url(#bl)"/>
<path d="M1499.500 387L1507 401H1503V897H1496V401H1492z" fill="#777" opacity=".65" filter="url(#bl)"/>
<path d="M838.500 541.500L846 555.500H840.200L839.200 900H835.800L836.800 555.500H831z" fill="#c00000"/>
<path d="M1494.700 382L1502 396H1496.400L1496 893H1492.700L1493 396H1487.500z" fill="#c00000"/>
</svg>
</body></html>
